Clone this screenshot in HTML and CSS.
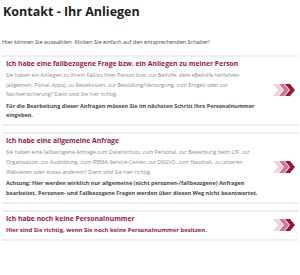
FILE: index.html
```html
<!DOCTYPE html>
<html lang="de">
<head>
  <meta charset="UTF-8">
  <meta name="viewport" content="width=device-width, initial-scale=1.0">
  <title>Kontakt - Ihr Anliegen</title>
  <link rel="stylesheet" href="styles.css">
</head>
<body>
  <div class="page">
    <h1>Kontakt - Ihr Anliegen</h1>
    <p class="intro">Hier können Sie auswählen. Klicken Sie einfach auf den entsprechenden Schalter!</p>

    <a class="card" href="#">
      <div class="text">
        <h2>Ich habe eine fallbezogene Frage bzw. ein Anliegen zu meiner Person</h2>
        <p class="desc">Sie haben ein Anliegen zu Ihrem Fall/zu Ihrer Person bzw. zur Beihilfe, dem eBeihilfe-Verfahren (allgemein, Portal, Apps), zu Reisekosten, zur Besoldung/Versorgung, zum Entgelt oder zur Nachversicherung? Dann sind Sie hier richtig.</p>
        <p class="note">Für die Bearbeitung dieser Anfragen müssen Sie im nächsten Schritt Ihre Personalnummer eingeben.</p>
      </div>
      <svg class="arrows" viewBox="0 0 22 12" width="22" height="12">
        <polygon fill="#f0d2da" points="0,0 5,0 10,6 5,12 0,12 5,6"/>
        <polygon fill="#cb7a92" points="6,0 11,0 16,6 11,12 6,12 11,6"/>
        <polygon fill="#9b1537" points="12,0 17,0 22,6 17,12 12,12 17,6"/>
      </svg>
    </a>

    <a class="card" href="#">
      <div class="text">
        <h2>Ich habe eine allgemeine Anfrage</h2>
        <p class="desc">Sie haben eine fallbezogene Anfrage zum Datenschutz, zum Personal, zur Bewerbung beim LfF, zur Organisation, zur Ausbildung, zum IPEMA-Service-Center, zur DSGVO, zum Haushalt, zu unseren Webseiten oder etwas anderem? Dann sind Sie hier richtig.</p>
        <p class="note">Achtung: Hier werden wirklich nur allgemeine (nicht personen-/fallbezogene) Anfragen bearbeitet. Personen- und Fallbezogene Fragen werden über diesen Weg nicht beantwortet.</p>
      </div>
      <svg class="arrows" viewBox="0 0 22 12" width="22" height="12">
        <polygon fill="#f0d2da" points="0,0 5,0 10,6 5,12 0,12 5,6"/>
        <polygon fill="#cb7a92" points="6,0 11,0 16,6 11,12 6,12 11,6"/>
        <polygon fill="#9b1537" points="12,0 17,0 22,6 17,12 12,12 17,6"/>
      </svg>
    </a>

    <a class="card" href="#">
      <div class="text">
        <h2>Ich habe noch keine Personalnummer</h2>
        <p class="note red">Hier sind Sie richtig, wenn Sie noch keine Personalnummer besitzen.</p>
      </div>
      <svg class="arrows" viewBox="0 0 22 12" width="22" height="12">
        <polygon fill="#f0d2da" points="0,0 5,0 10,6 5,12 0,12 5,6"/>
        <polygon fill="#cb7a92" points="6,0 11,0 16,6 11,12 6,12 11,6"/>
        <polygon fill="#9b1537" points="12,0 17,0 22,6 17,12 12,12 17,6"/>
      </svg>
    </a>
  </div>
</body>
</html>
```

FILE: styles.css
```css
* {
  margin: 0;
  padding: 0;
  box-sizing: border-box;
  font-family: "Open Sans", sans-serif;
}
body {
  background: #ffffff;
}
.page {
  padding: 4px 2px 0 2px;
}
h1 {
  font-size: 12.5px;
  font-weight: bold;
  color: #222222;
  line-height: 16px;
  padding-left: 1px;
}
.intro {
  font-size: 5.5px;
  color: #444444;
  margin-top: 17px;
  line-height: 10px;
}
.card {
  display: flex;
  align-items: center;
  text-decoration: none;
  border-top: 2px solid #eeeeee;
  border-bottom: 2px solid #eeeeee;
  padding: 2px 0 3.5px 4px;
  margin-bottom: 6px;
}
.card:first-of-type {
  margin-top: 8px;
}
.text {
  flex: 1;
  padding-right: 6px;
}
h2 {
  font-size: 6.8px;
  font-weight: bold;
  color: #9b1a3c;
  line-height: 10px;
}
.desc {
  font-size: 5.3px;
  color: #8a8a8a;
  line-height: 9.6px;
  margin-top: 2px;
}
.note {
  font-size: 5.5px;
  font-weight: bold;
  color: #484848;
  line-height: 9.6px;
  margin-top: 2px;
}
.note.red {
  color: #9b1a3c;
  font-size: 5.9px;
}
.arrows {
  flex: none;
  margin-right: 3px;
}
```
